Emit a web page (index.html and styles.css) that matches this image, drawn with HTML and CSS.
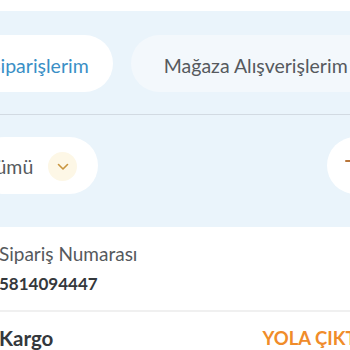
FILE: index.html
```html
<!DOCTYPE html>
<html lang="tr">
<head>
<meta charset="utf-8">
<link rel="stylesheet" href="styles.css">
</head>
<body>
<div class="page">
  <div class="top-gap"></div>
  <section class="tabs">
    <div class="tab tab-active">Siparişlerim</div>
    <div class="tab tab-other">Mağaza Alışverişlerim</div>
  </section>
  <section class="filters">
    <div class="filter-pill">
      <span class="filter-text">Tümü</span>
      <span class="chev"><svg width="12" height="8" viewBox="0 0 12 8"><path d="M1.5 1.5 L6 6 L10.5 1.5" fill="none" stroke="#c9953f" stroke-width="1.6" stroke-linecap="round" stroke-linejoin="round"/></svg></span>
    </div>
    <div class="round-btn"><svg width="20" height="20" viewBox="0 0 20 20"><path d="M3 4 L7 4" stroke="#b9763a" stroke-width="2" stroke-linecap="round"/></svg></div>
  </section>
  <section class="card">
    <div class="row">
      <div class="label">Sipariş Numarası</div>
      <div class="value num">5814094447</div>
    </div>
    <div class="divider"></div>
    <div class="row row-split">
      <div class="value kargo">Kargo</div>
      <div class="status">YOLA ÇIKTI</div>
    </div>
  </section>
</div>
</body>
</html>
```
FILE: styles.css
```css
html, body {
  margin: 0;
  padding: 0;
  background: #ffffff;
  overflow: hidden;
}
.page {
  width: 350px;
  height: 350px;
  font-family: Lato, "Noto Sans", sans-serif;
  overflow: hidden;
}
.top-gap {
  height: 11px;
  background: #ffffff;
}
.tabs {
  background: #eaf4fb;
  height: 104px;
  box-sizing: border-box;
  padding-top: 24px;
  border-bottom: 1px solid #d2dae2;
  display: flex;
  gap: 18px;
  margin-left: -34px;
  white-space: nowrap;
}
.tab {
  height: 57px;
  border-radius: 29px;
  display: flex;
  align-items: center;
  font-size: 19.5px;
  padding-top: 3px;
  box-sizing: border-box;
  flex-shrink: 0;
}
.tab-active {
  background: #ffffff;
  color: #3a8fc6;
  padding-left: 24px;
  padding-right: 24px;
}
.tab-other {
  background: #f3f8fc;
  color: #565a5e;
  padding-left: 33px;
  padding-right: 33px;
}
.filters {
  background: #eaf4fb;
  height: 112px;
  box-sizing: border-box;
  padding-top: 22px;
  display: flex;
  justify-content: space-between;
}
.filter-pill {
  height: 57px;
  background: #ffffff;
  border-radius: 29px;
  display: flex;
  align-items: center;
  margin-left: -24px;
  padding: 2px 21px 0 10px;
  box-sizing: border-box;
  gap: 15px;
}
.filter-text {
  font-size: 19.5px;
  color: #555a5e;
}
.chev {
  width: 29px;
  height: 29px;
  border-radius: 50%;
  background: #fdf7e6;
  display: flex;
  align-items: center;
  justify-content: center;
}
.round-btn {
  width: 57px;
  height: 57px;
  border-radius: 50%;
  background: #ffffff;
  margin-right: -34px;
  display: flex;
  align-items: flex-start;
  justify-content: flex-start;
  padding: 20px 0 0 16px;
  box-sizing: border-box;
}
.card {
  background: #ffffff;
  margin-left: -1px;
}
.row {
  padding: 16px 0 14px 0;
}
.row-split {
  display: flex;
  justify-content: space-between;
  align-items: center;
  padding-top: 14px;
  white-space: nowrap;
}
.label {
  font-size: 19px;
  color: #55595d;
  line-height: 22px;
}
.value {
  font-weight: 700;
  color: #34383c;
  line-height: 24px;
}
.num {
  font-size: 17px;
  margin-top: 7px;
}
.kargo {
  font-size: 20.5px;
}
.status {
  font-size: 18.5px;
  font-weight: 700;
  color: #f08c2a;
  margin-right: -12px;
}
.divider {
  height: 2px;
  background: #f0f0f0;
}
```
